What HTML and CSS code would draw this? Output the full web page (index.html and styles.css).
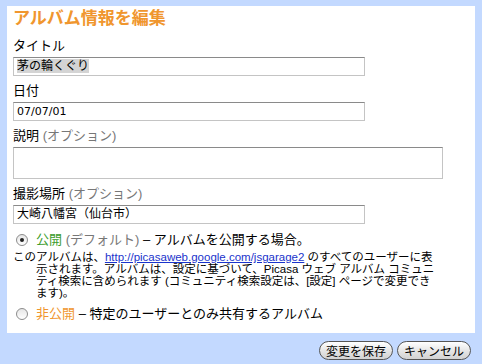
FILE: index.html
```html
<!DOCTYPE html>
<html lang="ja">
<head>
    <meta charset="UTF-8">
    <meta name="viewport" content="width=device-width, initial-scale=1.0">
    <title>アルバム情報を編集</title>
    <link rel="stylesheet" href="styles.css">
</head>
<body>
    <div class="panel">
        <h1>アルバム情報を編集</h1>

        <!-- Album fields -->
        <div class="label first">タイトル</div>
        <div class="field short"><span class="selected">茅の輪くぐり</span></div>

        <div class="label">日付</div>
        <div class="field short latin">07/07/01</div>

        <div class="label">説明 <span class="optional">(オプション)</span></div>
        <div class="field area"></div>

        <div class="label">撮影場所 <span class="optional">(オプション)</span></div>
        <div class="field short">大崎八幡宮（仙台市）</div>

        <!-- Visibility -->
        <div class="radio-row">
            <span class="radio checked"></span>
            <span><span class="public">公開</span> <span class="optional">(デフォルト)</span> – アルバムを公開する場合。</span>
        </div>
        <p class="note">このアルバムは、<a href="#">http://picasaweb.google.com/jsgarage2</a> のすべてのユーザーに表<br>示されます。アルバムは、設定に基づいて、Picasa ウェブ アルバム コミュニ<br>ティ検索に含められます (コミュニティ検索設定は、[設定] ページで変更でき<br>ます)。</p>
        <div class="radio-row second">
            <span class="radio"></span>
            <span><span class="private">非公開</span> – 特定のユーザーとのみ共有するアルバム</span>
        </div>
    </div>

    <div class="actions">
        <button class="btn">変更を保存</button>
        <button class="btn">キャンセル</button>
    </div>
</body>
</html>
```

FILE: styles.css
```css
/* General styling */
body {
    margin: 0;
    padding: 0;
    background-color: #c3d9ff;
    font-family: "Liberation Sans", "Noto Sans CJK JP", sans-serif;
    color: #000;
}
.panel {
    margin: 6px 7px 0 7px;
    width: 456px;
    height: 323px;
    padding: 3px 6px 1px 6px;
    background: #fff;
}
.panel h1 {
    margin: 0;
    font-size: 17px;
    line-height: 20px;
    font-weight: bold;
    color: #f0962e;
}
.label {
    margin-top: 7px;
    font-size: 13px;
    line-height: 16px;
}
.label.first {
    margin-top: 9px;
}
.optional {
    color: #777;
}
/* Fields */
.field {
    box-sizing: border-box;
    margin-top: 3px;
    height: 19px;
    padding: 1px 3px;
    border: 1px solid #c4c4c4;
    border-top-color: #8a8a8a;
    font-size: 12px;
    line-height: 15px;
    white-space: nowrap;
}
.field.short {
    width: 352px;
}
.field.area {
    width: 430px;
    height: 32px;
}
.field.latin {
    font-family: "DejaVu Sans", sans-serif;
    font-size: 11px;
}
.selected {
    background: #d4d4d4;
}
/* Radios */
.radio-row {
    display: flex;
    align-items: center;
    gap: 8px;
    margin-top: 8px;
    padding-left: 3px;
    font-size: 13px;
    line-height: 16px;
}
.radio-row.second {
    margin-top: 7px;
}
.radio {
    box-sizing: border-box;
    width: 12px;
    height: 12px;
    border: 1px solid #8c8c8c;
    border-radius: 50%;
    background: linear-gradient(#e6e6e6, #fff);
    display: flex;
    align-items: center;
    justify-content: center;
}
.radio.checked::after {
    content: "";
    width: 4px;
    height: 4px;
    border-radius: 50%;
    background: #222;
}
.public {
    color: #3c9c2c;
}
.private {
    color: #f0962e;
}
.note {
    margin: 3px 0 0 23px;
    text-indent: -23px;
    font-size: 11.5px;
    line-height: 12px;
    white-space: nowrap;
}
.note a {
    color: #1a33cc;
}
/* Buttons */
.actions {
    display: flex;
    justify-content: flex-end;
    gap: 4px;
    margin: 8px 11px 0 0;
}
.btn {
    height: 19px;
    padding: 0 6px;
    border: 1px solid #555;
    border-radius: 10px;
    background: linear-gradient(#ffffff, #e4e4e4 55%, #d2d2d2);
    font-family: "Noto Sans CJK JP", sans-serif;
    font-size: 12px;
    line-height: 16px;
    color: #000;
}
```
